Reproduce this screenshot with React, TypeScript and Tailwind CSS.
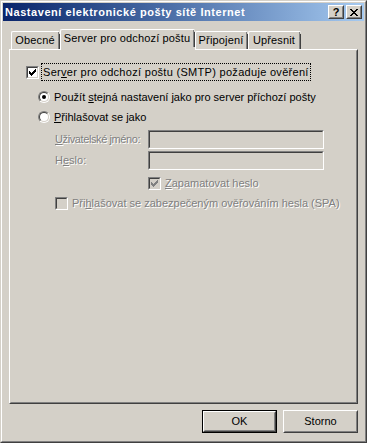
import React from "react";

const Check = ({ color = "#000" }: { color?: string }) => (
  <svg width="7" height="7" viewBox="0 0 7 7" shapeRendering="crispEdges">
    <path
      fill={color}
      d="M6 0h1v3h-1zM5 1h1v3h-1zM4 2h1v3h-1zM3 3h1v3h-1zM2 4h1v3h-1zM1 3h1v3h-1zM0 2h1v3h-1z"
    />
  </svg>
);

const CheckBox = ({ checked, disabled }: { checked?: boolean; disabled?: boolean }) => (
  <div className="w-[13px] h-[13px] shrink-0 border border-t-[#808080] border-l-[#808080] border-b-white border-r-white">
    <div
      className={`w-full h-full border border-t-[#404040] border-l-[#404040] border-b-[#d4d0c8] border-r-[#d4d0c8] flex items-center justify-center ${
        disabled ? "bg-[#d4d0c8]" : "bg-white"
      }`}
    >
      {checked && <Check color={disabled ? "#808080" : "#000"} />}
    </div>
  </div>
);

const Radio = ({ checked }: { checked?: boolean }) => (
  <div className="w-[12px] h-[12px] shrink-0 rounded-full border border-t-[#808080] border-l-[#808080] border-b-white border-r-white">
    <div className="w-full h-full rounded-full border border-t-[#404040] border-l-[#404040] border-b-[#d4d0c8] border-r-[#d4d0c8] bg-white flex items-center justify-center">
      {checked && <div className="w-[4px] h-[4px] rounded-full bg-black" />}
    </div>
  </div>
);

const Input = () => (
  <div className="w-[176px] h-[19px] border border-t-[#808080] border-l-[#808080] border-b-white border-r-white">
    <div className="w-full h-full border border-t-[#404040] border-l-[#404040] border-b-[#d4d0c8] border-r-[#d4d0c8] bg-[#d4d0c8]" />
  </div>
);

const dis = "text-[#808080] [text-shadow:1px_1px_0_#fff]";

const CapBtn = ({ children }: { children: React.ReactNode }) => (
  <div className="w-[16px] h-[14px] border border-t-white border-l-white border-b-[#404040] border-r-[#404040] bg-[#d4d0c8]">
    <div className="w-full h-full border border-t-[#d4d0c8] border-l-[#d4d0c8] border-b-[#808080] border-r-[#808080] flex items-center justify-center">
      {children}
    </div>
  </div>
);

const Tab = ({ label, w, selected }: { label: string; w: number; selected?: boolean }) => (
  <div
    style={{ width: w }}
    className={`flex items-center justify-center bg-[#d4d0c8] border-l border-t border-l-white border-t-white rounded-tl-[2px] rounded-tr-[2px] tracking-[0.15px] ${
      selected ? "h-[21px] relative top-[1px] z-10 pb-[3px]" : "h-[18px]"
    }`}
  >
    <div className="flex-1 h-full flex items-center justify-center border-r border-r-[#808080] pb-[1px]">
      {label}
    </div>
    <div className="w-px h-[calc(100%-2px)] self-end bg-[#404040]" />
  </div>
);

const Btn = ({ children, def }: { children: React.ReactNode; def?: boolean }) => (
  <div className={`w-[75px] h-[23px] ${def ? "border border-black" : ""}`}>
    <div className="w-full h-full border border-t-white border-l-white border-b-[#404040] border-r-[#404040]">
      <div className="w-full h-full border border-t-[#d4d0c8] border-l-[#d4d0c8] border-b-[#808080] border-r-[#808080] flex items-center justify-center pb-[1px]">
        {children}
      </div>
    </div>
  </div>
);

export default function App() {
  return (
    <div className="w-[367px] h-[443px] bg-[#d4d0c8] font-['Liberation_Sans',Arial,sans-serif] text-[11px] leading-none text-black border border-t-[#d4d0c8] border-l-[#d4d0c8] border-b-[#404040] border-r-[#404040] select-none">
      <div className="w-full h-full border border-t-white border-l-white border-b-[#808080] border-r-[#808080] p-px flex flex-col">
        {/* Title bar */}
        <div className="h-[18px] shrink-0 flex items-center bg-gradient-to-r from-[#0a246a] to-[#a6caf0] pl-[2px] pr-[2px]">
          <div className="flex-1 text-white font-bold text-[11px] tracking-[0.55px]">
            Nastavení elektronické pošty sítě Internet
          </div>
          <div className="flex gap-[2px]">
            <CapBtn>
              <span className="font-bold text-[11px] leading-none">?</span>
            </CapBtn>
            <CapBtn>
              <svg width="8" height="7" viewBox="0 0 8 7" shapeRendering="crispEdges">
                <path
                  fill="#000"
                  d="M0 0h2v1h-2zM6 0h2v1h-2zM1 1h2v1h-2zM5 1h2v1h-2zM2 2h4v1h-4zM3 3h2v1h-2zM2 4h4v1h-4zM1 5h2v1h-2zM5 5h2v1h-2zM0 6h2v1h-2zM6 6h2v1h-2z"
                />
              </svg>
            </CapBtn>
          </div>
        </div>

        {/* Body */}
        <div className="flex-1 flex flex-col px-[6px] pt-[8px]">
          <div className="h-[20px] flex items-end pl-[2px]">
            <Tab label="Obecné" w={49} />
            <Tab label="Server pro odchozí poštu" w={135} selected />
            <Tab label="Připojení" w={53} />
            <Tab label="Upřesnit" w={53} />
          </div>
          <div className="flex-1 border border-t-white border-l-white border-b-[#404040] border-r-[#404040]">
            <div className="w-full h-full border border-t-[#d4d0c8] border-l-[#d4d0c8] border-b-[#808080] border-r-[#808080] pt-[12px] pl-[15px] flex flex-col">
              <div className="h-[18px] flex items-center">
                <CheckBox checked />
                <div className="ml-[2px] h-[18px] flex items-center border border-dotted border-black pl-[1px] pr-[1px] tracking-[0.3px]">
                  Ser<u>v</u>er pro odchozí poštu (SMTP) požaduje ověření
                </div>
              </div>
              <div className="mt-[7px] h-[18px] flex items-center pl-[12px]">
                <Radio checked />
                <span className="ml-[4px]">
                  Použít <u>s</u>tejná nastavení jako pro server příchozí pošty
                </span>
              </div>
              <div className="mt-[2px] h-[18px] flex items-center pl-[12px]">
                <Radio />
                <span className="ml-[4px]">
                  <u>P</u>řihlašovat se jako
                </span>
              </div>
              <div className="mt-[4px] flex items-center pl-[29px]">
                <span className={`w-[93px] tracking-[-0.4px] ${dis}`}>
                  <u>U</u>živatelské jméno:
                </span>
                <Input />
              </div>
              <div className="mt-[2px] flex items-center pl-[29px]">
                <span className={`w-[93px] ${dis}`}>
                  H<u>e</u>slo:
                </span>
                <Input />
              </div>
              <div className="mt-[4px] h-[18px] flex items-center pl-[122px]">
                <CheckBox checked disabled />
                <span className={`ml-[4px] ${dis}`}>
                  <u>Z</u>apamatovat heslo
                </span>
              </div>
              <div className="mt-[2px] h-[18px] flex items-center pl-[29px]">
                <CheckBox disabled />
                <span className={`ml-[4px] ${dis}`}>
                  Při<u>h</u>lašovat se zabezpečeným ověřováním hesla (SPA)
                </span>
              </div>
            </div>
          </div>
          <div className="mt-[6px] mb-[7px] flex justify-end gap-[6px]">
            <Btn def>OK</Btn>
            <Btn>Storno</Btn>
          </div>
        </div>
      </div>
    </div>
  );
}
